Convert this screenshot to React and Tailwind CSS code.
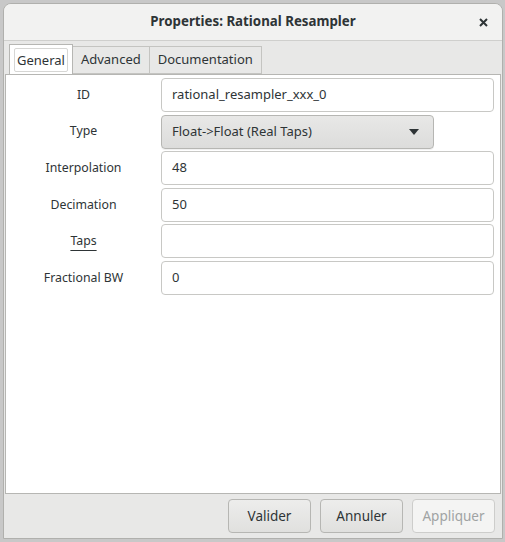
import { useState } from 'react';

// ── Rows ──────────────────────────────────────────────────────────────────────
const FIELDS = [
  { label: 'ID', value: 'rational_resampler_xxx_0' },
  { label: 'Type', value: 'Float->Float (Real Taps)', combo: true },
  { label: 'Interpolation', value: '48' },
  { label: 'Decimation', value: '50' },
  { label: 'Taps', value: '', underline: true },
  { label: 'Fractional BW', value: '0' },
];

const TABS = ['General', 'Advanced', 'Documentation'];

function Field({ label, value, combo, underline }) {
  return (
    <div className="flex h-[34px] items-center">
      <div className="w-[155px] text-center text-[12.3px] text-[#2e3436]">
        <span className={underline ? 'underline decoration-1 underline-offset-[5px]' : ''}>{label}</span>
      </div>
      {combo ? (
        <div className="flex h-[34px] w-[273px] items-center justify-between rounded-[4px] border border-[#b6b6b3] bg-gradient-to-b from-[#e8e8e7] to-[#dcdcdb] pl-[10px] pr-[14px] text-[13px] text-[#2e3436] shadow-[0_1px_0_rgba(0,0,0,0.06)]">
          <span>{value}</span>
          <svg width="10" height="6" viewBox="0 0 10 6">
            <path d="M0 0h10L5 6z" fill="#2e3436" />
          </svg>
        </div>
      ) : (
        <div className="flex h-[34px] flex-1 items-center rounded-[4px] border border-[#c8c8c5] bg-white pl-[10px] text-[13px] text-[#2e3436]">
          {value}
        </div>
      )}
    </div>
  );
}

function Btn({ children, disabled }) {
  return (
    <button
      className={`h-[34px] w-[83px] rounded-[4px] border text-[13.5px] ${
        disabled
          ? 'border-[#cdcdcb] bg-[#f4f4f3] text-[#a0a3a3]'
          : 'border-[#b6b6b3] bg-gradient-to-b from-[#ededec] to-[#e0e0de] text-[#2e3436]'
      }`}
    >
      {children}
    </button>
  );
}

export default function App() {
  const [tab, setTab] = useState(0);

  return (
    <div
      className="h-[542px] w-[505px] bg-[#c8c8c8] pl-[3px] pr-[2px] pt-[3px] pb-[3px]"
      style={{ fontFamily: '"Noto Sans", "Open Sans", sans-serif' }}
    >
      <div className="flex h-full flex-col overflow-hidden rounded-t-[8px] border border-[#b0b0ad] bg-[#e8e8e7]">
        {/* Title bar */}
        <div className="relative flex h-[37px] shrink-0 items-center justify-center border-b border-[#cfcfcd] bg-[#f2f2f1]">
          <span className="text-[13.3px] font-bold text-[#2e3436]">Properties: Rational Resampler</span>
          <svg className="absolute right-[14px] top-[14px]" width="9" height="9" viewBox="0 0 9 9">
            <path d="M1 1l7 7M8 1L1 8" stroke="#2e3436" strokeWidth="2" />
          </svg>
        </div>

        {/* Tabs */}
        <div className="mt-[3px] flex pl-[5px]">
          {TABS.map((t, i) => (
            <button
              key={t}
              onClick={() => setTab(i)}
              className={
                i === tab
                  ? 'relative z-10 -mb-px flex h-[30px] items-center border border-b-0 border-[#b6b6b3] bg-white px-[4px]'
                  : 'mt-[2px] flex h-[28px] items-center border border-l-0 border-[#c4c4c1] bg-[#e8e8e7] px-[8px] text-[13px] text-[#2e3436]'
              }
            >
              {i === tab ? (
                <span className="rounded-[2px] border border-[#d6d6d4] px-[2px] text-[13px] leading-[22px] text-[#2e3436]">
                  {t}
                </span>
              ) : (
                t
              )}
            </button>
          ))}
        </div>

        {/* Page */}
        <div className="mx-[1px] flex h-[420px] flex-col gap-[2.6px] border border-[#b6b6b3] bg-white pr-[6px] pt-[3px]">
          {FIELDS.map((f) => (
            <Field key={f.label} {...f} />
          ))}
        </div>

        {/* Buttons */}
        <div className="flex justify-end gap-[9px] pr-[7px] pt-[5px]">
          <Btn>Valider</Btn>
          <Btn>Annuler</Btn>
          <Btn disabled>Appliquer</Btn>
        </div>
      </div>
    </div>
  );
}
